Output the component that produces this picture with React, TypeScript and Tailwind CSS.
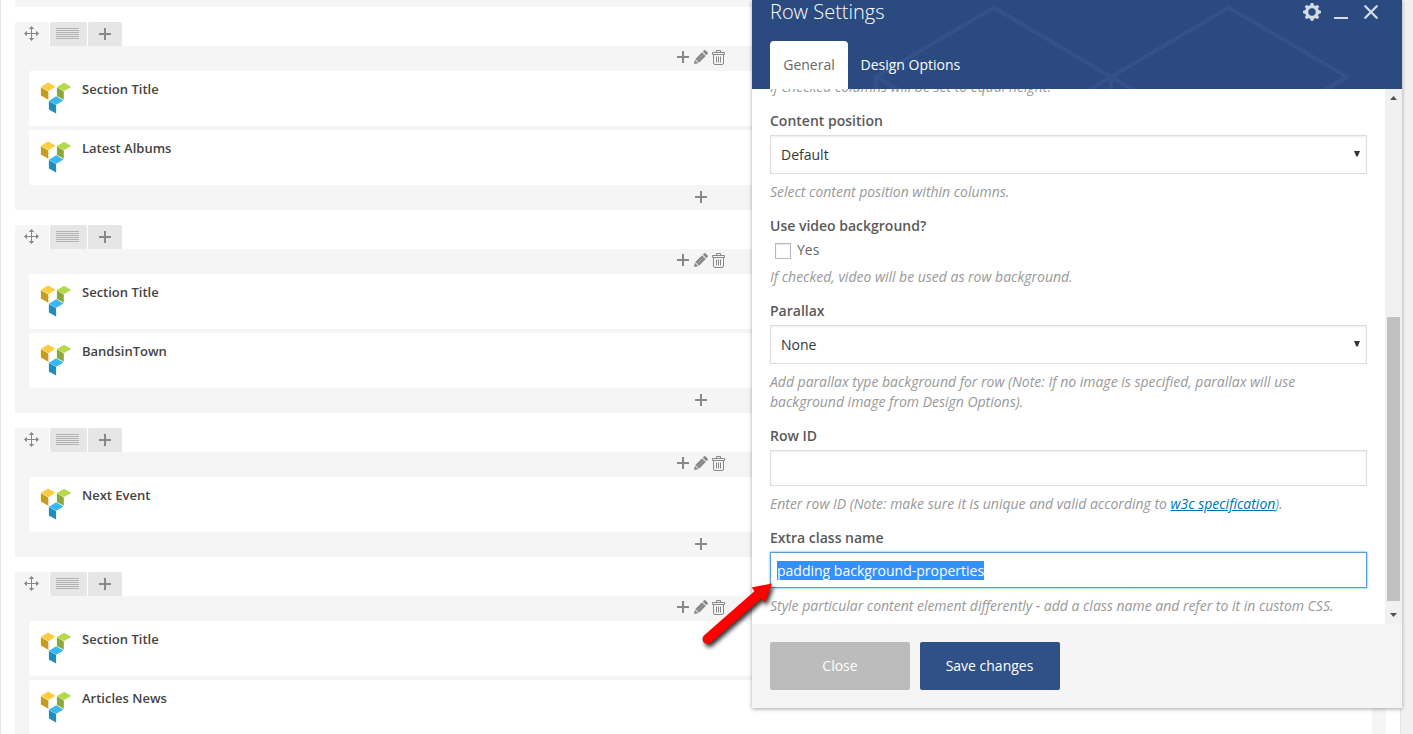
import React from "react";

type Row = { items: string[] };

const rows: Row[] = [
  { items: ["Section Title", "Latest Albums"] },
  { items: ["Section Title", "BandsinTown"] },
  { items: ["Next Event"] },
  { items: ["Section Title", "Articles News"] },
];

function Plus({ className = "" }: { className?: string }) {
  return (
    <svg width="12" height="12" viewBox="0 0 12 12" fill="#888" className={className} shapeRendering="crispEdges">
      <path d="M5 0h2v5h5v2H7v5H5V7H0V5h5z" />
    </svg>
  );
}

function Move() {
  return (
    <svg width="15" height="15" viewBox="0 0 15 15" fill="#888">
      <path d="M7 2h1v5h5v1H8v5H7V8H2V7h5z" />
      <path d="M7.500 0l2.700 3H4.800zM7.500 15l2.700-3H4.800zM0 7.500l3-2.700v5.400zM15 7.500l-3-2.700v5.400z" />
    </svg>
  );
}

function Pencil() {
  return (
    <svg width="14" height="14" viewBox="0 0 14 14" fill="#888">
      <path d="M0 14l.8-4.300 3.500 3.500zM1.300 9L8.100 2.300l3.700 3.600L5 12.700zM8.800 1.600L10.200.3q.6-.5 1.200 0l2.300 2.300q.5.600 0 1.200l-1.300 1.400z" />
      <path d="M3.600 10.400l6.400-6.400" stroke="#bbb" strokeWidth=".5" />
    </svg>
  );
}

function Trash() {
  return (
    <svg width="13" height="15" viewBox="0 0 13 15" fill="none" stroke="#888">
      <path d="M4.500 2V.5h4V2M.5 4.500v-2h12v2zM1.500 4.500v8.500q0 1.500 1.500 1.500h7q1.500 0 1.500-1.500V4.500M4.500 6.500v6M6.500 6.500v6M8.500 6.500v6" />
    </svg>
  );
}

function Cubes() {
  return (
    <svg width="32" height="32" viewBox="0 0 32 32" className="shrink-0">
      <path fill="#ffcb3f" d="M.9 4.800L8.200.6l7.300 4.200-6.900 4.300z" />
      <path fill="#c69c1e" d="M.9 5.200l7.500 4.200v8.400L.9 13.500z" />
      <path fill="#f1e6c8" d="M8.700 9.400l.8-.4v8.400l-.8.400z" />
      <path fill="#b4d94a" d="M16.900 4.900L24.100.7l7.200 4.200L24 9.100z" />
      <path fill="#88a936" d="M16.900 5.300l6.900 4.200v8.300l-3-1.700-3.900-2.200z" />
      <path fill="#39b7f1" d="M8.900 18.700l7.300-4.400 7.300 4.200-7.300 4.200z" />
      <path fill="#1f8dbd" d="M8.900 19l7.200 4.100v8.400l-7.200-4z" />
    </svg>
  );
}

function BuilderRow({ items }: Row) {
  return (
    <section className="mb-[15px] shrink-0">
      <div className="flex h-6 gap-px">
        <div className="flex w-[34px] rounded-t-[2px] bg-[#f5f5f5] pt-1 pl-[9px]">
          <Move />
        </div>
        <div className="flex w-[37px] rounded-t-[2px] bg-[#e6e6e6] pt-[6px] pl-[6px]">
          <svg width="23" height="11" viewBox="0 0 23 11" fill="#b2b2b2" shapeRendering="crispEdges">
            <path d="M0 0h23v1H0zM0 2h23v1H0zM0 4h23v1H0zM0 6h23v1H0zM0 8h23v1H0zM0 10h23v1H0z" />
          </svg>
        </div>
        <div className="flex w-[34px] justify-center rounded-t-[2px] bg-[#e6e6e6] pt-[6px]">
          <Plus />
        </div>
      </div>
      <div className="bg-[#f5f5f5] px-[14px]">
        <div className="flex h-[25px] pt-1 pl-[648px]">
          <Plus className="mt-px mr-[5px]" />
          <Pencil />
          <div className="ml-1">
            <Trash />
          </div>
        </div>
        <div className="flex flex-col gap-1">
          {items.map((t) => (
            <div key={t} className="flex h-[55px] rounded-[2px] bg-white pt-[11px] pl-[11px]">
              <Cubes />
              <span className="-mt-[3px] ml-[10px] text-[13px] leading-5 font-semibold text-[#444]">{t}</span>
            </div>
          ))}
        </div>
        <div className="flex h-[25px] justify-center pt-[6px]">
          <Plus />
        </div>
      </div>
    </section>
  );
}

function Label({ children }: { children: React.ReactNode }) {
  return <div className="h-5 text-[14px] leading-5 font-semibold text-[#5a5a5a]">{children}</div>;
}

function Hint({ children }: { children: React.ReactNode }) {
  return <p className="text-[14px] leading-5 tracking-[-0.01px] text-[#999] italic">{children}</p>;
}

function Select({ value }: { value: string }) {
  return (
    <div className="mt-1 mb-2 flex h-[39px] items-center justify-between border border-[#ddd] pr-[6px] pl-[10px] text-[14px] text-[#32373c] shadow-[inset_0_1px_2px_rgba(0,0,0,0.07)]">
      <span>{value}</span>
      <svg width="6" height="6" viewBox="0 0 6 6" fill="#32373c" className="mb-[2px]">
        <path d="M0 0h6L3.700 5.500H2.300z" />
      </svg>
    </div>
  );
}

function RowSettings() {
  return (
    <div className="absolute top-0 left-[752px] flex h-[708px] w-[650px] flex-col bg-[#f5f5f5] shadow-[0_1px_4px_rgba(0,0,0,0.35)]">
      <header className="relative flex h-[89px] shrink-0 flex-col justify-between bg-[#2b4b80] px-[18px] text-white">
        <svg className="absolute inset-0" width="650" height="89" viewBox="0 0 650 89" fill="none" stroke="#335289" strokeWidth="4">
          <path d="M124 100V77L242 7.500 359 77V100M124 77L242 145L359 77L477 7.500L595 77L477 145L359 77" />
        </svg>
        <div className="relative flex justify-between">
          <h1 className="-mt-[3px] text-[20px] leading-[30px] font-light">Row Settings</h1>
          <div className="mr-[6px] flex text-[#d5dbe6]">
            <svg width="18" height="18" viewBox="0 0 18 18" className="mt-[3px]">
              <g fill="currentColor">
                <rect x="7.300" y="0" width="3.400" height="18" rx="1.400" />
                <rect x="7.300" y="0" width="3.400" height="18" rx="1.400" transform="rotate(45 9 9)" />
                <rect x="7.300" y="0" width="3.400" height="18" rx="1.400" transform="rotate(90 9 9)" />
                <rect x="7.300" y="0" width="3.400" height="18" rx="1.400" transform="rotate(135 9 9)" />
                <circle cx="9" cy="9" r="7" />
              </g>
              <circle cx="9" cy="9" r="3.700" fill="#2b4b80" />
            </svg>
            <span className="mt-[17px] ml-[13px] h-[2px] w-[14px] bg-[#d5dbe6]" />
            <svg width="14" height="14" viewBox="0 0 14 14" className="mt-[5px] ml-4" fill="none" stroke="currentColor" strokeWidth="2.300" strokeLinecap="round">
              <path d="M1.300 1.300l11.400 11.400M12.700 1.300L1.300 12.700" />
            </svg>
          </div>
        </div>
        <nav className="relative flex h-12 text-[14px] leading-[48px]">
          <div className="w-[78px] rounded-t-[4px] bg-white text-center text-[#686868]">General</div>
          <div className="pl-[12.5px]">Design Options</div>
        </nav>
      </header>

      <div className="flex h-[535px] shrink-0 overflow-hidden bg-white">
        <div className="-mt-3 w-[615px] pl-[18px]">
          <Hint>If checked columns will be set to equal height.</Hint>
          <div className="mt-[14px]">
            <Label>Content position</Label>
            <Select value="Default" />
            <Hint>Select content position within columns.</Hint>
          </div>
          <div className="mt-[14px]">
            <Label>Use video background?</Label>
            <div className="mb-[7px] flex h-6 pt-[4px] pl-[5px] text-[14px] leading-5 text-[#686868]">
              <span className="mt-[3px] h-4 w-4 border border-[#b4b9be] bg-white shadow-[inset_0_1px_2px_rgba(0,0,0,0.1)]" />
              <span className="ml-[6px]">Yes</span>
            </div>
            <Hint>If checked, video will be used as row background.</Hint>
          </div>
          <div className="mt-[14px]">
            <Label>Parallax</Label>
            <Select value="None" />
            <Hint>
              Add parallax type background for row (Note: If no image is specified, parallax will use
              <br />
              background image from Design Options).
            </Hint>
          </div>
          <div className="mt-[14px]">
            <Label>Row ID</Label>
            <div className="mt-1 mb-2 h-9 border border-[#ddd] shadow-[inset_0_1px_2px_rgba(0,0,0,0.07)]" />
            <Hint>
              Enter row ID (Note: make sure it is unique and valid according to{" "}
              <span className="text-[#0073aa] underline">w3c specification</span>).
            </Hint>
          </div>
          <div className="mt-[14px]">
            <Label>Extra class name</Label>
            <div className="mt-1 mb-2 flex h-9 items-center border border-[#5b9dd9] pl-[6px] text-[14px] shadow-[0_0_2px_rgba(30,140,190,0.8)]">
              <span className="h-[19px] bg-[#3390ff] leading-[19px] text-white">padding background-properties</span>
            </div>
            <Hint>Style particular content element differently - add a class name and refer to it in custom CSS.</Hint>
          </div>
        </div>
        <div className="ml-[18px] flex w-[17px] flex-col items-center bg-[#f1f1f1]">
          <svg width="7" height="4" viewBox="0 0 7 4" fill="#505050" className="mt-[7px]">
            <path d="M0 4L3.500 0 7 4z" />
          </svg>
          <div className="mt-[217px] h-[284px] w-[13px] bg-[#c1c1c1]" />
          <svg width="7" height="4" viewBox="0 0 7 4" fill="#505050" className="mt-3">
            <path d="M0 0h7L3.500 4z" />
          </svg>
        </div>
      </div>

      <footer className="flex gap-[10px] px-[18px] pt-[18px] text-[14px] text-white">
        <button className="h-12 w-[140px] rounded-[2px] bg-[#bcbcbc] pb-[2px]">Close</button>
        <button className="h-12 w-[140px] rounded-[2px] bg-[#305088] pr-px pb-[2px]">Save changes</button>
      </footer>
    </div>
  );
}

export default function App() {
  return (
    <div className="relative h-[734px] w-[1413px] overflow-hidden bg-[#f1f1f1] font-['Open_Sans',sans-serif]">
      <main className="flex h-full w-[1401px] flex-col overflow-hidden border-x border-[#e5e5e5] bg-white px-[14px]">
        <div className="mb-[15px] h-[7px] shrink-0 bg-[#f5f5f5]" />
        {rows.map((r, i) => (
          <BuilderRow key={i} items={r.items} />
        ))}
      </main>
      <RowSettings />
      <svg className="absolute top-[570px] left-[690px]" width="100" height="90" viewBox="0 0 100 90" style={{ filter: "drop-shadow(2px 3px 2px rgba(0,0,0,0.8))" }}>
        <path d="M17.500 69L70 23" stroke="#f00" strokeWidth="10" strokeLinecap="round" />
        <path d="M61.500 17.500L82 13.500 75 32.500z" fill="#f00" />
      </svg>
    </div>
  );
}
